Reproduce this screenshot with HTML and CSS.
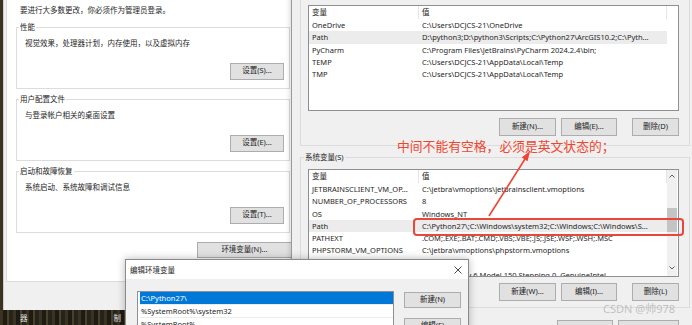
FILE: index.html
```html
<!DOCTYPE html>
<html lang="zh-CN">
<head>
  <meta charset="UTF-8">
  <title>环境变量</title>
  <link rel="stylesheet" href="styles.css">
</head>
<body>
<div class="desktop">
  <div class="desk-icons"><span>器</span><span>制</span></div>

  <!-- system properties, advanced tab -->
  <div class="win sysprops">
    <div class="tabpanel">
      <p class="intro">要进行大多数更改，你必须作为管理员登录。</p>
      <fieldset class="group">
        <legend>性能</legend>
        <p class="desc">视觉效果，处理器计划，内存使用，以及虚拟内存</p>
        <div class="btn-row"><button class="btn btn-set">设置(S)...</button></div>
      </fieldset>
      <fieldset class="group">
        <legend>用户配置文件</legend>
        <p class="desc">与登录帐户相关的桌面设置</p>
        <div class="btn-row"><button class="btn btn-set">设置(E)...</button></div>
      </fieldset>
      <fieldset class="group">
        <legend>启动和故障恢复</legend>
        <p class="desc">系统启动、系统故障和调试信息</p>
        <div class="btn-row"><button class="btn btn-set">设置(T)...</button></div>
      </fieldset>
      <div class="env-row"><button class="btn btn-env">环境变量(N)...</button></div>
    </div>
  </div>

  <!-- environment variables -->
  <div class="win envvars">
    <fieldset class="group-env user-group">
      <div class="varlist">
        <div class="var-body">
          <div class="var-head"><span>变量</span><span>值</span></div>
          <div class="var-row"><span>OneDrive</span><span>C:\Users\DCJCS-21\OneDrive</span></div>
          <div class="var-row hl"><span>Path</span><span>D:\python3;D:\python3\Scripts;C:\Python27\ArcGIS10.2;C:\Pyth...</span></div>
          <div class="var-row"><span>PyCharm</span><span>C:\Program Files\JetBrains\PyCharm 2024.2.4\bin;</span></div>
          <div class="var-row"><span>TEMP</span><span>C:\Users\DCJCS-21\AppData\Local\Temp</span></div>
          <div class="var-row"><span>TMP</span><span>C:\Users\DCJCS-21\AppData\Local\Temp</span></div>
        </div>
      </div>
      <div class="env-btns">
        <button class="btn btn-new">新建(N)...</button>
        <button class="btn btn-edit">编辑(E)...</button>
        <button class="btn btn-del">删除(D)</button>
      </div>
    </fieldset>

    <fieldset class="group-env sys-group">
      <legend>系统变量(S)</legend>
      <div class="varlist sys">
        <div class="var-body">
          <div class="var-head"><span>变量</span><span>值</span></div>
          <div class="var-row"><span>JETBRAINSCLIENT_VM_OP...</span><span>C:\jetbra\vmoptions\jetbrainsclient.vmoptions</span></div>
          <div class="var-row"><span>NUMBER_OF_PROCESSORS</span><span>8</span></div>
          <div class="var-row"><span>OS</span><span>Windows_NT</span></div>
          <div class="var-row hl"><span>Path</span><span>C:\Python27\;C:\Windows\system32;C:\Windows;C:\Windows\S...</span></div>
          <div class="var-row"><span>PATHEXT</span><span>.COM;.EXE;.BAT;.CMD;.VBS;.VBE;.JS;.JSE;.WSF;.WSH;.MSC</span></div>
          <div class="var-row"><span>PHPSTORM_VM_OPTIONS</span><span>C:\jetbra\vmoptions\phpstorm.vmoptions</span></div>
          <div class="var-row"><span>PROCESSOR_ARCHITECTURE</span><span>AMD64</span></div>
          <div class="var-row"><span>PROCESSOR_IDENTIFIER</span><span>Intel64 Family 6 Model 150 Stepping 0, GenuineIntel</span></div>
        </div>
        <div class="vscroll">
          <div class="sb-arrow sb-up">
            <svg width="6" height="4" viewBox="0 0 6 4"><path d="M0.5 3.5 L3 1 L5.5 3.5" fill="none" stroke="#606060" stroke-width="1"/></svg>
          </div>
          <div class="sb-track"><div class="sb-thumb"></div></div>
          <div class="sb-arrow sb-down">
            <svg width="6" height="4" viewBox="0 0 6 4"><path d="M0.5 0.5 L3 3 L5.5 0.5" fill="none" stroke="#606060" stroke-width="1"/></svg>
          </div>
        </div>
      </div>
      <div class="env-btns">
        <button class="btn btn-new">新建(W)...</button>
        <button class="btn btn-edit">编辑(I)...</button>
        <button class="btn btn-del">删除(L)</button>
      </div>
    </fieldset>

    <div class="env-bottom">
      <button class="btn btn-ok">确定</button>
      <button class="btn btn-cancel">取消</button>
    </div>
  </div>

  <!-- edit environment variable -->
  <div class="win editdlg">
    <div class="edit-title">
      <span>编辑环境变量</span>
      <svg class="close" width="8" height="8" viewBox="0 0 8 8"><path d="M0.5 0.5 L7.5 7.5 M7.5 0.5 L0.5 7.5" stroke="#333" stroke-width="0.9"/></svg>
    </div>
    <div class="edit-body">
      <div class="pathlist">
        <div class="path-item selected">C:\Python27\</div>
        <div class="path-item">%SystemRoot%\system32</div>
        <div class="path-item">%SystemRoot%</div>
      </div>
      <div class="edit-btns">
        <button class="btn btn-side">新建(N)</button>
        <button class="btn btn-side">编辑(E)</button>
      </div>
    </div>
  </div>

  <!-- annotation -->
  <div class="note">中间不能有空格，必须是英文状态的；</div>
  <div class="redbox"></div>
  <svg class="arrow" width="692" height="325" viewBox="0 0 692 325">
    <line x1="489" y1="216" x2="525" y2="159" stroke="#ee4433" stroke-width="1.6"/>
    <polygon points="530,151 527.6,161.3 521.7,157.6" fill="#ee4433"/>
  </svg>
  <div class="watermark">CSDN @帅978</div>
</div>
</body>
</html>
```

FILE: styles.css
```css
* {
  box-sizing: border-box;
}

body {
  margin: 0;
  width: 692px;
  height: 325px;
  overflow: hidden;
  font-family: "Noto Sans", "Noto Sans CJK SC", sans-serif;
  font-size: 7.5px;
  color: #1e1e1e;
}

.desktop {
  position: relative;
  width: 692px;
  height: 325px;
  overflow: hidden;
  background:
    repeating-linear-gradient(90deg, #3a3322 0 3px, #1d1b14 3px 7px, #4a4128 7px 9px, #26231a 9px 13px);
}

.desk-icons {
  position: absolute;
  left: 0;
  top: 310px;
  width: 125px;
  height: 15px;
  display: flex;
  justify-content: space-between;
  align-items: center;
  padding: 0 4px 0 20px;
  color: #e6e6e6;
}

.win {
  position: absolute;
}

/* left window */
.sysprops {
  left: 3px;
  top: 0;
  width: 300px;
  height: 310px;
  background: #f0f0f0;
  border-left: 1px solid #cfcfcf;
}

.tabpanel {
  margin-left: 2px;
  width: 298px;
  height: 282px;
  background: #fff;
  border: 1px solid #dadada;
  border-top: 0;
  padding: 4px 0 0 9px;
}

.intro {
  margin: 0 0 0 4px;
  line-height: 12px;
}

.group {
  margin: 5px 0 0;
  width: 274px;
  padding: 0 5px 8.5px 2px;
  border: 1px solid #dcdcdc;
  min-width: 0;
}

.group + .group {
  margin-top: 4px;
}

legend {
  padding: 0 1px;
  line-height: 12px;
}

.desc {
  margin: 3.5px 0 0 6px;
  line-height: 12px;
}

.btn-row {
  display: flex;
  justify-content: flex-end;
  margin-top: 14px;
}

.btn {
  font: inherit;
  color: #1e1e1e;
  background: #e1e1e1;
  border: 1px solid #adadad;
  padding: 0;
  margin: 0;
  line-height: 1;
}

.btn-set {
  width: 54px;
  height: 17px;
}

.env-row {
  margin: 9px 0 0 181px;
}

.btn-env {
  width: 95px;
  height: 16px;
}

/* environment variables window */
.envvars {
  left: 291px;
  top: -20px;
  width: 410px;
  height: 360px;
  background: #f0f0f0;
  border-left: 1px solid #9a9a9a;
  box-shadow: -2px 0 4px rgba(0, 0, 0, 0.12);
  padding: 10px 0 0 8px;
}

.group-env {
  margin: 0;
  width: 390px;
  border: 1px solid #dcdcdc;
  min-width: 0;
}

.user-group {
  padding: 14px 10px 9px 7px;
}

.sys-group {
  margin-top: 5px;
  padding: 6px 10px 6px 7px;
}

.sys-group legend {
  margin-left: -4px;
}

.varlist {
  display: flex;
  width: 371px;
  height: 106px;
  background: #fff;
  border: 1px solid #8c8f96;
  overflow: hidden;
}

.varlist.sys {
  height: 108px;
}

.var-body {
  width: 358px;
  flex: none;
}

.var-head,
.var-row {
  display: grid;
  grid-template-columns: 110px 248px;
  white-space: nowrap;
}

.var-head {
  height: 13px;
  line-height: 13px;
}

.var-head span {
  border-right: 1px solid #e5e5e5;
}

.var-row {
  height: 12.3px;
  line-height: 12.3px;
}

.var-head span,
.var-row span {
  padding-left: 3px;
  overflow: hidden;
}

.var-row.hl {
  background: #ececec;
}

.vscroll {
  width: 10px;
  background: #f0f0f0;
  display: flex;
  flex-direction: column;
}

.sb-arrow {
  height: 11px;
  display: flex;
  align-items: center;
  justify-content: center;
}

.sb-down {
  height: 13px;
}

.sb-track {
  height: 80px;
  padding-top: 27px;
}

.sb-thumb {
  height: 24px;
  background: #c4c4c4;
}

.env-btns {
  display: flex;
  justify-content: flex-end;
  margin-top: 6px;
}

.user-group .env-btns {
  margin-top: 7px;
}

.env-btns .btn {
  height: 18px;
}

.btn-new {
  width: 57px;
}

.btn-edit {
  width: 56px;
  margin-left: 5px;
}

.btn-del {
  width: 47px;
  margin-left: 15px;
}

.env-bottom {
  display: flex;
  justify-content: flex-end;
  width: 379px;
  margin-top: 12px;
}

.env-bottom .btn {
  height: 20px;
  padding-top: 8px;
}

.btn-ok {
  width: 56px;
}

.btn-cancel {
  width: 61px;
  margin-left: 5px;
}

/* edit dialog */
.editdlg {
  left: 125px;
  top: 259px;
  width: 344px;
  height: 90px;
  background: #f0f0f0;
  border: 1px solid #8a8a8a;
  box-shadow: 0 0 8px rgba(0, 0, 0, 0.28);
}

.edit-title {
  height: 19px;
  background: #fff;
  display: flex;
  align-items: center;
  justify-content: space-between;
  padding: 0 6px 0 4px;
}

.edit-body {
  display: flex;
  gap: 10px;
  padding: 12px 0 0 11px;
}

.pathlist {
  width: 257px;
  height: 60px;
  background: #fff;
  border: 1px solid #8c8f96;
  padding-left: 2px;
}

.path-item {
  height: 13px;
  line-height: 12px;
  padding-left: 1px;
  border-bottom: 1px solid #ececec;
  white-space: nowrap;
}

.path-item.selected {
  background: #0078d7;
  color: #fff;
}

.edit-btns {
  display: flex;
  flex-direction: column;
  gap: 10px;
  padding-top: 1px;
}

.btn-side {
  width: 57px;
  height: 16px;
}

/* annotation on top */
.note {
  position: absolute;
  left: 397px;
  top: 137px;
  font-family: "Noto Sans CJK SC", sans-serif;
  font-size: 12.8px;
  line-height: 18px;
  color: #f0452f;
  white-space: nowrap;
}

.redbox {
  position: absolute;
  left: 413px;
  top: 218px;
  width: 271px;
  height: 18px;
  border: 2px solid #e9473a;
  border-radius: 4px;
}

.arrow {
  position: absolute;
  left: 0;
  top: 0;
  pointer-events: none;
}

.watermark {
  position: absolute;
  left: 603px;
  top: 302px;
  font-size: 11px;
  line-height: 14px;
  color: rgba(160, 160, 160, 0.6);
  white-space: nowrap;
}
```
